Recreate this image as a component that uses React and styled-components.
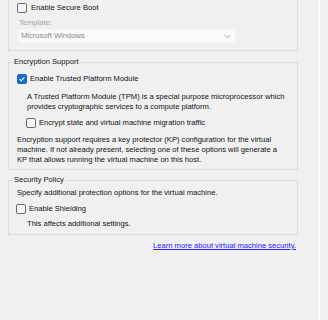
import React from "react";
import styled, { createGlobalStyle } from "styled-components";

const GlobalStyle = createGlobalStyle`
     html, body {
          margin: 0;
          padding: 0;
          background: #f0f0f0;
     }
     body {
          font-family: "Liberation Sans", Arial, sans-serif;
          font-size: 7.6px;
          line-height: 10px;
          color: #111;
     }
`;

const Page = styled.div`
     display: flex;
     width: 328px;
     height: 320px;
     overflow: hidden;
     background: #f0f0f0;
`;
const Main = styled.div`
     width: 311px;
     padding-left: 8px;
     display: flex;
     flex-direction: column;
`;
const Divider = styled.div`
     width: 1px;
     background: #fdfdfd;
`;
const Group = styled.fieldset`
     width: 288px;
     margin: ${({ $top }) => $top || 0}px 0 0 0;
     padding: 0 0 ${({ $bottom }) => $bottom || 0}px 0;
     border: 1px solid #dcdcdc;
     border-top: ${({ $cut }) => ($cut ? "none" : "1px solid #dcdcdc")};
     min-width: 0;
     display: flex;
     flex-direction: column;
     align-items: flex-start;
`;
const Legend = styled.legend`
     margin-left: 3px;
     padding: 0 2px;
     line-height: 10px;
     color: #111;
`;
const Row = styled.label`
     display: flex;
     align-items: center;
     height: 10px;
     margin: ${({ $top }) => $top || 0}px 0 0 ${({ $left }) => $left || 0}px;
     gap: ${({ $gap }) => $gap || 4}px;
`;
const Box = styled.span`
     box-sizing: border-box;
     width: 10px;
     height: 10px;
     border-radius: 2px;
     border: 1px solid ${({ $checked }) => ($checked ? "#1465bd" : "#6a6a6a")};
     background: ${({ $checked }) => ($checked ? "#1a6ec6" : "#f7f7f7")};
     display: flex;
     align-items: center;
     justify-content: center;
`;
const Text = styled.div`
     margin: ${({ $top }) => $top || 0}px 0 0 ${({ $left }) => $left || 0}px;
     color: ${({ $muted }) => ($muted ? "#a6a6a6" : "#111")};
     white-space: nowrap;
`;
const Select = styled.div`
     box-sizing: border-box;
     width: 218px;
     height: 14px;
     margin: 1px 0 0 9px;
     padding: 0 4px 0 2px;
     background: #f9f9f9;
     border: 1px solid #f4f4f4;
     display: flex;
     align-items: center;
     justify-content: space-between;
     color: #8a8a8a;
`;
const LinkRow = styled.div`
     width: 288px;
     margin-top: 6px;
     display: flex;
     justify-content: flex-end;
`;
const Link = styled.a`
     color: #2020ff;
     text-decoration: underline;
     cursor: pointer;
`;

const Check = ({ checked }) => (
     <Box $checked={checked}>
          {checked && (
               <svg width="8" height="8" viewBox="0 0 8 8">
                    <polyline
                         points="1.6,4.2 3.2,5.8 6.4,2.4"
                         fill="none"
                         stroke="#fff"
                         strokeWidth="1.1"
                    />
               </svg>
          )}
     </Box>
);

export default function App() {
     return (
          <Page>
               <GlobalStyle />
               <Main>
                    <Group $cut $bottom={7}>
                         <Row $top={3} $left={8} $gap={4}>
                              <Check />
                              <span>Enable Secure Boot</span>
                         </Row>
                         <Text $muted $top={5} $left={10}>
                              Template:
                         </Text>
                         <Select>
                              <span>Microsoft Windows</span>
                              <svg width="7" height="5" viewBox="0 0 7 5">
                                   <polyline
                                        points="0.5,1 3.5,4 6.5,1"
                                        fill="none"
                                        stroke="#b0b0b0"
                                        strokeWidth="1"
                                   />
                              </svg>
                         </Select>
                    </Group>

                    <Group $top={6} $bottom={4}>
                         <Legend>Encryption Support</Legend>
                         <Row $top={7} $left={8} $gap={3}>
                              <Check checked />
                              <span>Enable Trusted Platform Module</span>
                         </Row>
                         <Text $top={8} $left={18}>
                              A Trusted Platform Module (TPM) is a special purpose microprocessor which
                              <br />
                              provides cryptographic services to a compute platform.
                         </Text>
                         <Row $top={6} $left={17} $gap={3}>
                              <Check />
                              <span>Encrypt state and virtual machine migration traffic</span>
                         </Row>
                         <Text $top={7} $left={8}>
                              Encryption support requires a key protector (KP) configuration for the virtual
                              <br />
                              machine. If not already present, selecting one of these options will generate a
                              <br />
                              KP that allows running the virtual machine on this host.
                         </Text>
                    </Group>

                    <Group $top={5} $bottom={5}>
                         <Legend>Security Policy</Legend>
                         <Text $top={3} $left={8}>
                              Specify additional protection options for the virtual machine.
                         </Text>
                         <Row $top={6} $left={7} $gap={3}>
                              <Check />
                              <span>Enable Shielding</span>
                         </Row>
                         <Text $top={5} $left={18}>
                              This affects additional settings.
                         </Text>
                    </Group>

                    <LinkRow>
                         <Link>Learn more about virtual machine security.</Link>
                    </LinkRow>
               </Main>
               <Divider />
          </Page>
     );
}
